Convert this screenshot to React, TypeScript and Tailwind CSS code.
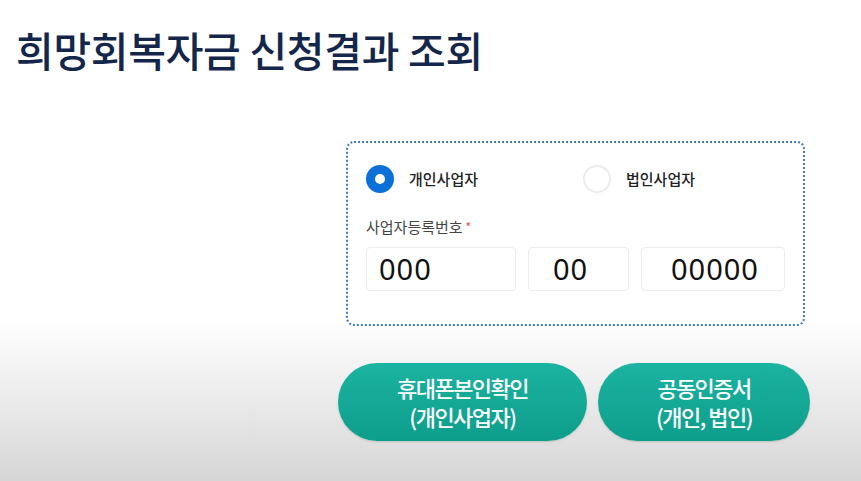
const font = { fontFamily: '"Noto Sans CJK KR", "Noto Sans", sans-serif' }

const Radio = ({ checked, label }: { checked: boolean; label: string }) => (
  <div className="flex items-center gap-[15px]">
    {checked ? (
      <span className="flex h-[28px] w-[28px] items-center justify-center rounded-full bg-[#0d6fd8]">
        <span className="h-[10px] w-[10px] rounded-full bg-white" />
      </span>
    ) : (
      <span className="h-[28px] w-[28px] rounded-full border-2 border-[#ececec] bg-white" />
    )}
    <span className="text-[15px] font-medium text-[#222]">{label}</span>
  </div>
)

const NumberInput = ({ value, className }: { value: string; className: string }) => (
  <div
    className={`flex h-[44px] items-center rounded-[4px] border border-[#ececec] bg-white text-[29px] tracking-[1px] text-[#111] ${className}`}
    style={{ fontFamily: '"Noto Sans", sans-serif' }}
  >
    {value}
  </div>
)

export default function App() {
  return (
    <div
      className="flex h-[481px] w-[861px] flex-col bg-[linear-gradient(to_bottom,#ffffff_0px,#ffffff_320px,#d6d6d6_481px)]"
      style={font}
    >
      <h1 className="ml-[16px] mt-[26px] text-[41px] font-medium leading-[46px] tracking-[-0.3px] text-[#14264a]">
        희망회복자금 신청결과 조회
      </h1>

      <div className="ml-[346px] mt-[69px] flex h-[185px] w-[459px] flex-col rounded-[8px] border-2 border-dotted border-[#3f7bb8] bg-white px-[18px] pt-[22px]">
        <div className="flex items-center">
          <div className="w-[217px]">
            <Radio checked label="개인사업자" />
          </div>
          <Radio checked={false} label="법인사업자" />
        </div>
        <div className="mt-[23px] flex items-start text-[15px] leading-[22px] text-[#444]">
          사업자등록번호<span className="ml-[3px] text-[12px] text-[#e04848]">*</span>
        </div>
        <div className="mt-[9px] flex gap-[12px]">
          <NumberInput value="000" className="w-[150px] pl-[12px]" />
          <NumberInput value="00" className="w-[101px] pl-[24px]" />
          <NumberInput value="00000" className="w-[144px] pl-[29px]" />
        </div>
      </div>

      <div className="ml-[338px] mt-[37px] flex gap-[11px]">
        <button className="flex h-[78px] w-[249px] flex-col items-center justify-center rounded-full bg-[linear-gradient(to_bottom,#1bb3a1,#0e9e8b)] text-[22px] font-medium leading-[29px] tracking-[-1.5px] text-white shadow-[0_1px_2px_rgba(0,0,0,0.15)]">
          <span>휴대폰본인확인</span>
          <span>(개인사업자)</span>
        </button>
        <button className="flex h-[78px] w-[212px] flex-col items-center justify-center rounded-full bg-[linear-gradient(to_bottom,#1bb3a1,#0e9e8b)] text-[22px] font-medium leading-[29px] tracking-[-1.5px] text-white shadow-[0_1px_2px_rgba(0,0,0,0.15)]">
          <span>공동인증서</span>
          <span>(개인, 법인)</span>
        </button>
      </div>
    </div>
  )
}
